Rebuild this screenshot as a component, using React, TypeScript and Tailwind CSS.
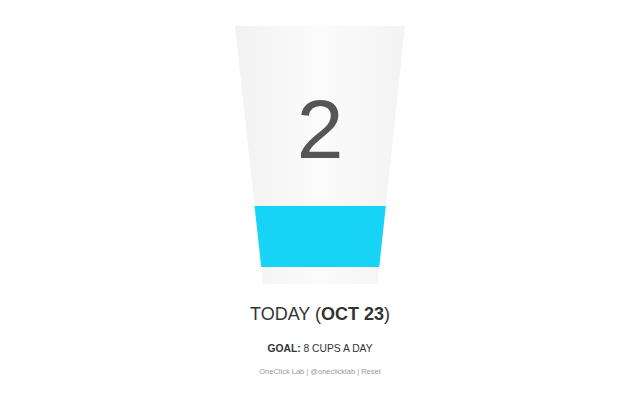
import React from "react";

const App: React.FC = () => {
  const cups = 2;

  return (
    <div className="w-[640px] h-[400px] bg-white flex flex-col items-center pt-[26px] font-['Liberation_Sans',Arial,sans-serif]">
      <div className="w-[170px] h-[258px] flex flex-col items-center pt-[61px] bg-gradient-to-r from-[#f2f2f2] via-[#fbfbfb] to-[#f3f3f3] [clip-path:polygon(0_0,100%_0,83.8%_100%,16.5%_100%)]">
        <div className="h-[84px] text-[84px] leading-[84px] text-[#555555]">{cups}</div>
        <div className="mt-[35px] w-full h-[61px] bg-[#17d4f7]" />
      </div>

      <h1 className="mt-[21px] text-[18px] leading-[18px] text-[#333333]">
        TODAY (<span className="font-bold">OCT 23</span>)
      </h1>

      <p className="mt-[20px] text-[10.3px] leading-[11px] text-[#333333]">
        <span className="font-bold">GOAL:</span> 8 CUPS A DAY
      </p>

      <p className="mt-[14px] text-[7.5px] leading-[8px] text-[#9a9a9a]">
        OneClick Lab | @oneclicklab | Reset
      </p>
    </div>
  );
};

export default App;
